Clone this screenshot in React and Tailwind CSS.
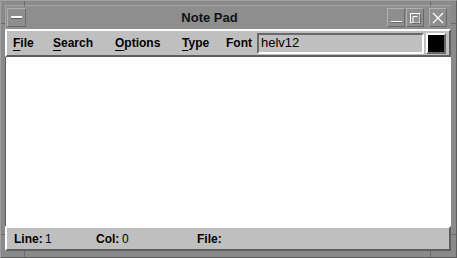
import React from "react";

const F = { fontFamily: '"Liberation Sans", Arial, sans-serif' };

function Menu({ first, rest, w }) {
  return (
    <span className={`font-bold text-[12px] leading-none text-black shrink-0 ${w}`}>
      <span className="underline decoration-1 underline-offset-[3px]">{first}</span>
      {rest}
    </span>
  );
}

export default function App() {
  return (
    <div className="relative w-[457px] h-[258px] bg-[#8a8a8a] border border-t-[#a0a0a0] border-l-[#a0a0a0] border-r-[#5e5e5e] border-b-[#5e5e5e] pt-[4px] pl-[4px] pr-[5px] pb-[6px] flex flex-col" style={F}>
      {/* frame corner separators */}
      <div className="absolute left-[23px] top-0 w-px h-[5px] bg-[#6a6a6a]" />
      <div className="absolute left-[429px] top-0 w-px h-[5px] bg-[#6a6a6a]" />
      <div className="absolute left-[23px] bottom-0 w-px h-[6px] bg-[#6a6a6a]" />
      <div className="absolute left-[429px] bottom-0 w-px h-[6px] bg-[#6a6a6a]" />
      <div className="absolute right-0 top-[22px] w-[5px] h-px bg-[#6a6a6a]" />
      <div className="absolute right-0 bottom-[22px] w-[5px] h-px bg-[#6a6a6a]" />
      <div className="absolute left-0 top-[22px] w-[4px] h-px bg-[#6a6a6a]" />
      <div className="absolute left-0 bottom-[22px] w-[4px] h-px bg-[#6a6a6a]" />

      {/* title bar */}
      <div className="h-[24px] flex items-center bg-[#8e8e8e] border-t border-l border-[#a6a6a6] pl-[1px]">
        <div className="w-[19px] h-[19px] border border-t-[#b0b0b0] border-l-[#b0b0b0] border-r-[#6a6a6a] border-b-[#6a6a6a] flex items-center justify-center">
          <div className="w-[11px] h-[3px] bg-white border-b border-[#5a5a5a]" />
        </div>
        <div className="flex-1 text-center font-bold text-[13px] text-[#111] pl-[6px] pt-[1px]">Note Pad</div>
        <div className="flex items-center gap-[1px] pr-[4px]">
          <div className="w-[18px] h-[19px] border border-t-[#b0b0b0] border-l-[#b0b0b0] border-r-[#6a6a6a] border-b-[#6a6a6a] flex items-end justify-center pb-[3px]">
            <div className="w-[11px] h-[2px] bg-white border-b border-[#6a6a6a]" />
          </div>
          <div className="w-[18px] h-[19px] border border-t-[#b0b0b0] border-l-[#b0b0b0] border-r-[#6a6a6a] border-b-[#6a6a6a] flex items-center justify-center">
            <svg width="12" height="12" viewBox="0 0 12 12">
              <path d="M1.5 11V1.5H11V11Z M4 11V4.5H8.5" fill="none" stroke="#fff" strokeWidth="1" />
              <path d="M2.5 11.5H11.5V2" fill="none" stroke="#6a6a6a" strokeWidth="1" />
            </svg>
          </div>
          <div className="w-[3px]" />
          <div className="w-[18px] h-[19px] border border-t-[#b0b0b0] border-l-[#b0b0b0] border-r-[#6a6a6a] border-b-[#6a6a6a] flex items-center justify-center">
            <svg width="14" height="14" viewBox="0 0 14 14">
              <path d="M2 2L12 12M12 2L2 12" stroke="#fff" strokeWidth="1.2" />
            </svg>
          </div>
        </div>
      </div>

      {/* menubar */}
      <div className="h-[28px] bg-[#bfbfbf] border-t-2 border-l-2 border-t-white border-l-white border-b-2 border-r-2 border-b-[#5e5e5e] border-r-[#5e5e5e] flex items-center pl-[6px]">
        <Menu first="F" rest="ile" w="w-[40px]" />
        <Menu first="S" rest="earch" w="w-[62px]" />
        <Menu first="O" rest="ptions" w="w-[67px]" />
        <Menu first="T" rest="ype" w="w-[44px]" />
        <span className="font-bold text-[12px] leading-none text-black w-[31px] shrink-0">Font</span>
        <div className="w-[167px] shrink-0 h-[21px] bg-[#c0c0c0] border-2 border-t-[#6a6a6a] border-l-[#6a6a6a] border-b-white border-r-white flex items-center pl-[2px] text-[13px] text-black">helv12</div>
        <div className="ml-[2px] w-[20px] shrink-0 h-[21px] bg-black border-2 border-t-white border-l-white border-b-[#6a6a6a] border-r-[#6a6a6a]" />
      </div>

      {/* text area */}
      <div className="flex-1 bg-white border-l border-[#5e5e5e]" />

      {/* status bar */}
      <div className="h-[25px] bg-[#bfbfbf] border-t-2 border-l-2 border-t-white border-l-white border-b-2 border-r-2 border-b-[#5e5e5e] border-r-[#5e5e5e] flex items-center text-[12px] text-black pt-[1px] pl-[7px]">
        <span className="font-bold w-[31px] shrink-0">Line:</span>
        <span className="w-[51px] shrink-0">1</span>
        <span className="font-bold w-[26px] shrink-0">Col:</span>
        <span className="w-[75px] shrink-0">0</span>
        <span className="font-bold">File:</span>
      </div>
    </div>
  );
}
